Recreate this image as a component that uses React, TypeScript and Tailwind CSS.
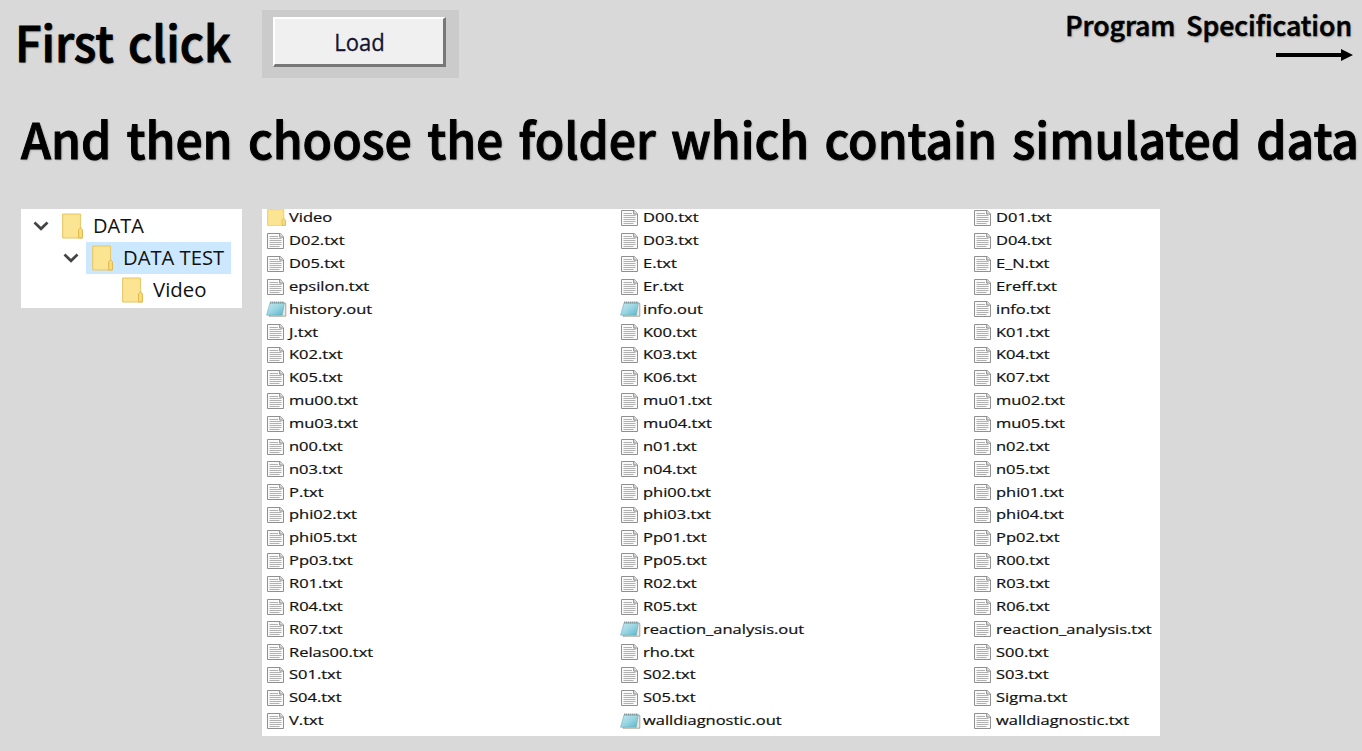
import React from 'react';

const rows: string[][] = [
  ['Video', 'D00.txt', 'D01.txt'],
  ['D02.txt', 'D03.txt', 'D04.txt'],
  ['D05.txt', 'E.txt', 'E_N.txt'],
  ['epsilon.txt', 'Er.txt', 'Ereff.txt'],
  ['history.out', 'info.out', 'info.txt'],
  ['J.txt', 'K00.txt', 'K01.txt'],
  ['K02.txt', 'K03.txt', 'K04.txt'],
  ['K05.txt', 'K06.txt', 'K07.txt'],
  ['mu00.txt', 'mu01.txt', 'mu02.txt'],
  ['mu03.txt', 'mu04.txt', 'mu05.txt'],
  ['n00.txt', 'n01.txt', 'n02.txt'],
  ['n03.txt', 'n04.txt', 'n05.txt'],
  ['P.txt', 'phi00.txt', 'phi01.txt'],
  ['phi02.txt', 'phi03.txt', 'phi04.txt'],
  ['phi05.txt', 'Pp01.txt', 'Pp02.txt'],
  ['Pp03.txt', 'Pp05.txt', 'R00.txt'],
  ['R01.txt', 'R02.txt', 'R03.txt'],
  ['R04.txt', 'R05.txt', 'R06.txt'],
  ['R07.txt', 'reaction_analysis.out', 'reaction_analysis.txt'],
  ['Relas00.txt', 'rho.txt', 'S00.txt'],
  ['S01.txt', 'S02.txt', 'S03.txt'],
  ['S04.txt', 'S05.txt', 'Sigma.txt'],
  ['V.txt', 'walldiagnostic.out', 'walldiagnostic.txt'],
];

function Folder({ className }: { className: string }) {
  return (
    <svg viewBox="0 0 21 26" preserveAspectRatio="none" className={className}>
      <path d="M.6 1h18v17.5l1.8 1V25H.6z" fill="#fbe08a" stroke="#e6c766" strokeWidth="1" />
      <path d="M2 2.5h15.4V24H2z" fill="#fce592" />
      <path d="M16.6 25v-8.2l2-2 1.8 2V25z" fill="#fadc7c" stroke="#dfb84d" strokeWidth="1" />
    </svg>
  );
}

function TextFile() {
  return (
    <svg viewBox="0 0 17 16" className="h-4 w-[17px]">
      <path d="M.5.5h12.7l3.3 3.3v11.7H.5z" fill="#fafafa" stroke="#909090" />
      <path d="M12.7.5v3.6h3.8" fill="#e2e2e2" stroke="#808080" strokeWidth=".9" />
      <path d="M2.5 3.5H11M2.5 5.5h12M2.5 7.5h12M2.5 9.5h12M2.5 11.5h12M2.5 13.5h10" stroke="#a8a8a8" strokeWidth=".9" />
    </svg>
  );
}

function Notepad() {
  return (
    <svg viewBox="0 0 21 16" className="h-4 w-[21px]">
      <defs>
        <linearGradient id="pad" x1="0" y1="0" x2="1" y2="1">
          <stop offset="0" stopColor="#c5e9ef" />
          <stop offset=".5" stopColor="#9ad5e2" />
          <stop offset="1" stopColor="#58b4cb" />
        </linearGradient>
      </defs>
      <path d="M18 1.8l1.8.7v12.7H3z" fill="#eee9df" stroke="#999186" strokeWidth=".8" />
      <path d="M4 1.8h14.3l-2 12.4H.6z" fill="url(#pad)" stroke="#66aec1" strokeWidth=".6" />
      <path d="M4.3 1.5h14" stroke="#6d7c80" strokeWidth="1.8" strokeDasharray="1 1" />
    </svg>
  );
}

function Chevron() {
  return (
    <svg viewBox="0 0 16 10" className="h-[10px] w-4 shrink-0">
      <path d="M1.5 1.5L8 7.8l6.5-6.3" fill="none" stroke="#444" strokeWidth="2.7" />
    </svg>
  );
}

function FileEntry({ name }: { name: string }) {
  const out = name.endsWith('.out');
  const folder = name === 'Video';
  return (
    <div className="flex h-[22.87px] items-center">
      <span className="flex w-[22px] shrink-0 items-center">
        {folder ? <Folder className="h-[17px] w-[19px]" /> : out ? <span className="-ml-px"><Notepad /></span> : <TextFile />}
      </span>
      <span className="origin-left scale-x-[1.33] whitespace-nowrap pt-px text-[12.4px] leading-none [-webkit-text-stroke:0.2px_#111]">{name}</span>
    </div>
  );
}

export default function App() {
  return (
    <main className="h-[751px] w-[1362px] overflow-hidden bg-[#d9d9d9] font-['Open_Sans','Noto_Sans',sans-serif] text-[#111]">
      <header className="flex h-[90px] items-start justify-between pl-[14px] font-['Noto_Sans_CJK_SC',sans-serif] font-medium text-black">
        <div className="flex">
          <div className="w-[248px]">
            <h1 className="w-max origin-left scale-x-[.955] whitespace-nowrap pl-px pt-[11px] text-[49px] leading-[60px] [-webkit-text-stroke:1px_black] [text-shadow:1px_1px_2px_#0005] [word-spacing:4px]">First click</h1>
          </div>
          <div className="mt-[10px] flex h-[68px] w-[197px] bg-[#cbcbcb] pl-[11px] pt-[7px]">
            <button className="h-[50px] w-[173px] border-2 border-b-[3px] border-r-[3px] border-b-[#777] border-l-white border-r-[#777] border-t-white bg-[#f0f0f0] font-['Open_Sans',sans-serif] text-[24px] font-normal leading-none text-[#151530]">
              <span className="inline-block scale-x-[.92] [-webkit-text-stroke:0.3px_#151530]">Load</span>
            </button>
          </div>
        </div>
        <div className="flex flex-col items-end pr-[9px] pt-[5px]">
          <h2 className="mr-px origin-right scale-x-[.985] whitespace-nowrap text-[27px] leading-[40px] [-webkit-text-stroke:0.6px_black] [text-shadow:1px_1px_2px_#0005] [word-spacing:5px]">Program Specification</h2>
          <svg viewBox="0 0 77 12" className="mt-[4px] h-3 w-[77px]">
            <path d="M0 4h65V0l12 6-12 6V8H0z" />
          </svg>
        </div>
      </header>
      <h1 className="h-[119px] w-max origin-left scale-x-[.98] whitespace-nowrap pl-[21.5px] pt-[18px] font-['Noto_Sans_CJK_SC',sans-serif] text-[49px] font-medium leading-[60px] text-black [-webkit-text-stroke:1px_black] [text-shadow:1px_1px_2px_#0005] [word-spacing:4.7px]">And then choose the folder which contain simulated data</h1>
      <div className="flex items-start gap-[20px] pl-[21px]">
        <section className="h-[99px] w-[221px] bg-white pt-px text-[20px]">
          <div className="flex h-8 items-center pl-[12px]">
            <Chevron />
            <Folder className="ml-[13px] h-[26px] w-[21px]" />
            <span className="ml-[10px] origin-left whitespace-nowrap">DATA</span>
          </div>
          <div className="flex h-8 items-center pl-[42px]">
            <Chevron />
            <div className="ml-[7px] flex h-8 w-[145px] items-center bg-[#cce8ff] pl-[6px]">
              <Folder className="h-[26px] w-[21px] shrink-0" />
              <span className="ml-[10px] origin-left scale-x-[1.01] whitespace-nowrap">DATA TEST</span>
            </div>
          </div>
          <div className="flex h-8 items-center pl-[101px]">
            <Folder className="h-[26px] w-[21px]" />
            <span className="ml-[10px] origin-left scale-x-[1.02] whitespace-nowrap">Video</span>
          </div>
        </section>
        <section className="h-[527px] w-[898px] overflow-hidden bg-white pl-[5px]">
          <div className="-mt-[2.5px] grid grid-cols-[353.7px_353.7px_1fr]">
            {rows.flat().map((name) => <FileEntry key={name} name={name} />)}
          </div>
        </section>
      </div>
    </main>
  );
}
